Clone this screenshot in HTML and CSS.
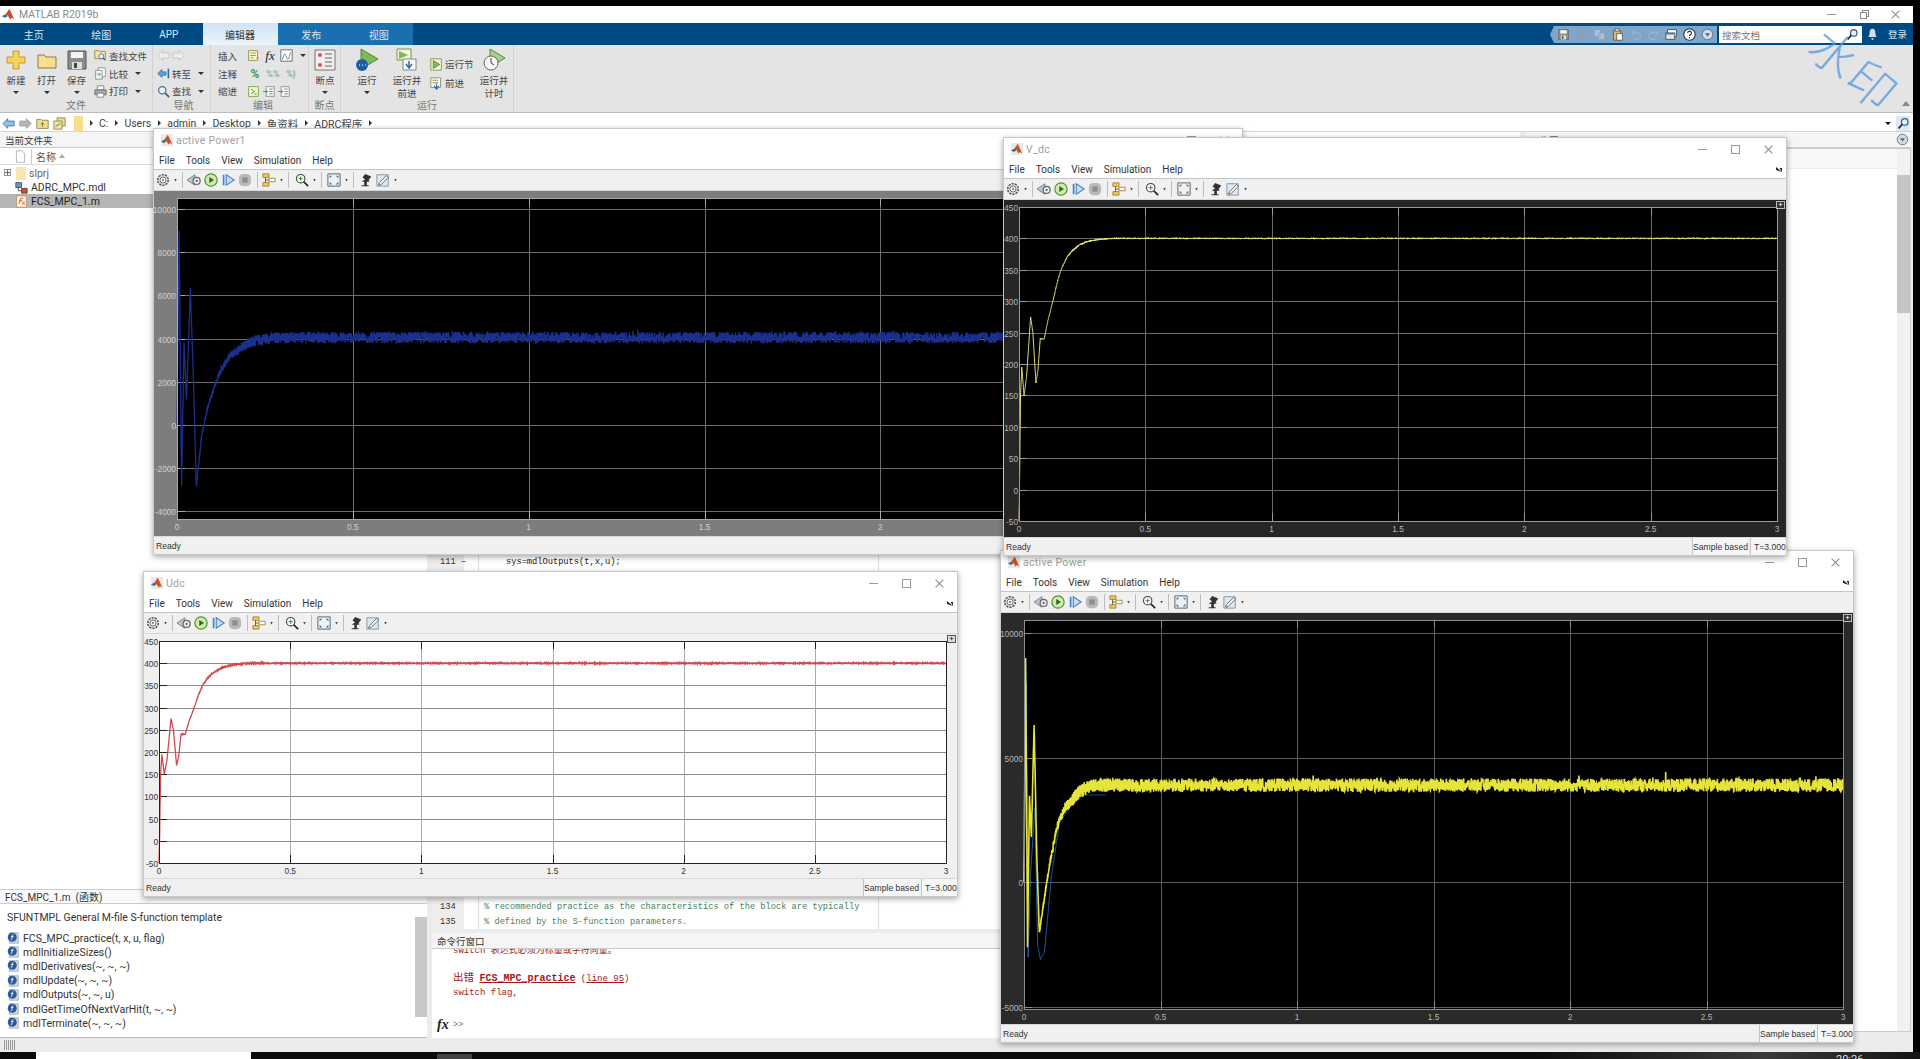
FILE: index.html
```html
<!DOCTYPE html>
<html>
<head>
  <meta charset="utf-8">
  <title>MATLAB R2019b</title>
  <link rel="stylesheet" href="styles.css">
</head>
<body>
  <svg class="sprite" xmlns="http://www.w3.org/2000/svg">
    <symbol id="i-logo" viewBox="0 0 16 16"><path d="M0 10l4-2 3-4 2-3 2 4 4 9-3-2-2 2-3-5-3 2z" fill="#c8502a"/><path d="M0 10l4-2 3 2-3 2z" fill="#3d6f9a"/></symbol>
    <symbol id="i-new" viewBox="0 0 24 24"><path d="M9 3h6v6h6v6h-6v6H9v-6H3V9h6z" fill="#f6d35f" stroke="#c99a2c"/></symbol>
    <symbol id="i-folder" viewBox="0 0 24 24"><path d="M3 7h6l2 2h10v11H3z" fill="#f7dd8f" stroke="#8c7a45"/></symbol>
    <symbol id="i-save" viewBox="0 0 24 24"><path d="M3 3h18v18H3z" fill="#8d8d8d" stroke="#555"/><path d="M6 4h12v6H6z" fill="#f4f4f4"/><path d="M7 14h10v7H7z" fill="#ddd"/><path d="M9 15h3v5H9z" fill="#444"/></symbol>
    <symbol id="i-find-file" viewBox="0 0 16 16"><path d="M1 2h5l1 1h7v9H1z" fill="#f7e3a1" stroke="#8c7a45"/><circle cx="9" cy="9" r="3" fill="#fff" stroke="#33658f"/><path d="M11 11l3 3" stroke="#33658f" stroke-width="1.5"/></symbol>
    <symbol id="i-compare" viewBox="0 0 16 16"><path d="M5 1h9v11H5z" fill="#fff" stroke="#888"/><path d="M2 4h8v11H2z" fill="#f3f3f3" stroke="#888"/><path d="M4 9h4M6 7l2 2-2 2" stroke="#5d88a8" fill="none"/></symbol>
    <symbol id="i-print" viewBox="0 0 16 16"><path d="M4 1h8v5H4z" fill="#fff" stroke="#777"/><path d="M1 6h14v6H1z" fill="#a8a8a8" stroke="#666"/><path d="M4 10h8v5H4z" fill="#fff" stroke="#777"/></symbol>
    <symbol id="i-left-pale" viewBox="0 0 16 16"><path d="M1 8l6-6v3h8v6H7v3z" fill="#eee" stroke="#c0c0c0"/></symbol>
    <symbol id="i-right-pale" viewBox="0 0 16 16"><path d="M15 8L9 2v3H1v6h8v3z" fill="#eee" stroke="#c0c0c0"/></symbol>
    <symbol id="i-goto" viewBox="0 0 16 16"><path d="M1 8l5-5v3h5v4H6v3z" fill="#5fa2d8" stroke="#2c6ea6"/><path d="M13 2h2v12h-2z" fill="#2c6ea6"/></symbol>
    <symbol id="i-lens" viewBox="0 0 16 16"><circle cx="6.5" cy="6.5" r="4.5" fill="#e8f2fa" stroke="#3a6f9c" stroke-width="1.4"/><path d="M10 10l5 5" stroke="#555" stroke-width="2"/></symbol>
    <symbol id="i-insert" viewBox="0 0 16 16"><path d="M2 2h11v12H2z" fill="#fff7d0" stroke="#7c8a3a"/><path d="M4 5h7M4 8h7M4 11h4" stroke="#7c8a3a"/><path d="M11 10h4l-2 4z" fill="#d99a2c"/></symbol>
    <symbol id="i-chart" viewBox="0 0 16 16"><path d="M1 1h14v14H1z" fill="#fff" stroke="#555"/><path d="M3 13c2-8 3-9 5-3s3 1 5-6" stroke="#3a6f9c" fill="none"/></symbol>
    <symbol id="i-indent" viewBox="0 0 16 16"><path d="M2 2h12v12H2z" fill="#f2f7d8" stroke="#6f9a3a"/><path d="M5 5l4 3-4 3M9 11h3" stroke="#3d7a28" fill="none"/></symbol>
    <symbol id="i-indent-in" viewBox="0 0 16 16"><path d="M5 2h10v12H5z" fill="#f7f7f7" stroke="#888"/><path d="M1 8h6M5 6l2 2-2 2" stroke="#4f8a32" fill="none"/><path d="M9 5h4M9 8h4M9 11h4" stroke="#4f8a32"/></symbol>
    <symbol id="i-breakpoints" viewBox="0 0 24 24"><path d="M2 2h20v20H2z" fill="#efefef" stroke="#777"/><circle cx="7" cy="7" r="2" fill="#d9534f"/><circle cx="7" cy="17" r="2" fill="#d9534f"/><path d="M12 6h7M12 10h7M12 14h7M12 18h7" stroke="#666"/></symbol>
    <symbol id="i-run" viewBox="0 0 24 24"><path d="M6 1l17 10-17 10z" fill="#7cb85c" stroke="#4f8a32"/><circle cx="7" cy="17" r="6" fill="#1f5fa0"/><path d="M4 17h1M7 17h1M10 17h1" stroke="#fff"/></symbol>
    <symbol id="i-run-advance" viewBox="0 0 24 24"><path d="M2 1h14v11H2z" fill="#f0f4d8" stroke="#6f9a3a"/><path d="M4 3l9 4-9 4z" fill="#7cb85c"/><path d="M8 11h13v11H8z" fill="#f7f7f7" stroke="#888"/><path d="M14 13v6M11 16l3 4 3-4" stroke="#2c6ea6" fill="none" stroke-width="1.5"/></symbol>
    <symbol id="i-run-section" viewBox="0 0 16 16"><path d="M1 1h13v14H1z" fill="#f4f6dc" stroke="#7c8a3a"/><path d="M4 3l8 5-8 5z" fill="#7cb85c" stroke="#4f8a32"/></symbol>
    <symbol id="i-advance" viewBox="0 0 16 16"><path d="M1 1h12v12H1z" fill="#fbfbfb" stroke="#7c8a3a"/><path d="M3 4h7M3 7h7" stroke="#7c8a3a"/><path d="M8 8v6M5 11l3 4 3-4" stroke="#2c6ea6" fill="none" stroke-width="1.5"/></symbol>
    <symbol id="i-run-time" viewBox="0 0 24 24"><path d="M8 1l15 9-15 9z" fill="#a8cf8e" stroke="#4f8a32"/><circle cx="9" cy="15" r="7" fill="#f7f7f7" stroke="#666"/><path d="M9 10v5l3 2" stroke="#444" fill="none"/></symbol>
    <symbol id="i-cut" viewBox="0 0 16 16"><path d="M5 1l4 9M11 1L7 10" stroke="#99a" fill="none"/><circle cx="5" cy="12" r="2" fill="none" stroke="#99a"/><circle cx="11" cy="12" r="2" fill="none" stroke="#99a"/></symbol>
    <symbol id="i-copy" viewBox="0 0 16 16"><path d="M2 2h7v8H2zM7 6h7v8H7z" fill="#a9c3dc" stroke="#8fa5b9"/></symbol>
    <symbol id="i-paste" viewBox="0 0 16 16"><path d="M3 3h9v12H3z" fill="#d8b878" stroke="#6a5a35"/><path d="M5 1h5v3H5z" fill="#eee" stroke="#555"/><path d="M7 7h7v8H7z" fill="#fff" stroke="#555"/></symbol>
    <symbol id="i-undo" viewBox="0 0 16 16"><path d="M3 6h7a3.500 3.500 0 0 1 0 8H6M3 6l3-3M3 6l3 3" fill="none" stroke="#9fb4c8" stroke-width="1.3"/></symbol>
    <symbol id="i-redo" viewBox="0 0 16 16"><path d="M13 6H6a3.500 3.500 0 0 0 0 8h4M13 6l-3-3M13 6l-3 3" fill="none" stroke="#9fb4c8" stroke-width="1.3"/></symbol>
    <symbol id="i-switch" viewBox="0 0 16 16"><path d="M3 2h11v9H3z" fill="#fff" stroke="#345"/><path d="M1 6h11v8H1z" fill="#e6e6e6" stroke="#345"/><path d="M1 6h11v2H1z" fill="#4f7ea8"/></symbol>
    <symbol id="i-help" viewBox="0 0 16 16"><circle cx="8" cy="8" r="7" fill="#fff" stroke="#234" stroke-width="1.3"/><path d="M5.800 6.200a2.300 2.300 0 1 1 3 2.200c-.6.300-.8.700-.8 1.400M8 11v1.500" fill="none" stroke="#234" stroke-width="1.500"/></symbol>
    <symbol id="i-more" viewBox="0 0 16 16"><circle cx="8" cy="8" r="6.500" fill="#cfdbe6" stroke="#567"/><path d="M5 6.500h6L8 10.500z" fill="#567"/></symbol>
    <symbol id="i-search" viewBox="0 0 16 16"><circle cx="9.500" cy="6" r="4" fill="#eaf3fb" stroke="#2c5f8a" stroke-width="1.500"/><path d="M6.500 9L2 14" stroke="#222" stroke-width="2"/></symbol>
    <symbol id="i-bell" viewBox="0 0 16 16"><path d="M8 1c-3 0-3.500 3-3.500 5 0 3-1.500 4-1.500 5h10c0-1-1.500-2-1.500-5 0-2-.5-5-3.500-5z" fill="#cfe0ee"/><path d="M6 12.500h4L8 15z" fill="#cfe0ee"/></symbol>
    <symbol id="i-back-blue" viewBox="0 0 16 16"><path d="M1 8l6-6v3h8v6H7v3z" fill="#8fc0e6" stroke="#3a6f9c"/></symbol>
    <symbol id="i-forward-grey" viewBox="0 0 16 16"><path d="M15 8L9 2v3H1v6h8v3z" fill="#b5b5b5" stroke="#999"/></symbol>
    <symbol id="i-up" viewBox="0 0 16 16"><path d="M1 3h5l1 1h8v10H1z" fill="#f7dd8f" stroke="#8c7a45"/><path d="M8 12V7M6 9l2-2 2 2" stroke="#3a7a28" fill="none"/></symbol>
    <symbol id="i-browse" viewBox="0 0 16 16"><path d="M5 1h10v10H5z" fill="#e8d9a0" stroke="#6f8a3a"/><path d="M1 5h10v10H1z" fill="#f7e3a1" stroke="#6f8a3a"/><path d="M3 12l6-4" stroke="#3a7a28"/></symbol>
    <symbol id="i-file" viewBox="0 0 16 16"><path d="M3 1h7l3 3v11H3z" fill="#fff" stroke="#aaa"/></symbol>
    <symbol id="i-mdl" viewBox="0 0 16 16"><path d="M1 2h7v6H1z" fill="#6f94b8" stroke="#345"/><path d="M8 9h7v6H8z" fill="#c8502a" stroke="#733"/><path d="M4 8v4h4" fill="none" stroke="#333"/></symbol>
    <symbol id="i-mfile" viewBox="0 0 16 16"><path d="M2 1h10l2 2v12H2z" fill="#fff6e6" stroke="#b98a5a"/><path d="M5 11l2-7h3M5 7h4M9 8l3 4M12 8l-3 4" stroke="#c44a2a" fill="none"/></symbol>
    <symbol id="i-fn" viewBox="0 0 16 16"><path d="M3 1h12v14H3z" fill="#d0d8e0" stroke="#9aa"/><circle cx="7" cy="7" r="6" fill="#2c5a9a"/><path d="M8.500 3.500C7 3.500 7 5 6.800 7S6.500 10.500 5 10.500M5.500 6h3" stroke="#fff" fill="none" stroke-width="1.200"/></symbol>
    <symbol id="t-gear" viewBox="0 0 16 16"><circle cx="8" cy="8" r="6" fill="#eee" stroke="#555" stroke-width="1.800" stroke-dasharray="2.500 1.200"/><circle cx="8" cy="8" r="3.500" fill="#fff" stroke="#555"/><circle cx="8" cy="8" r="1.300" fill="#888"/></symbol>
    <symbol id="t-back" viewBox="0 0 16 16"><path d="M0 8l9-6v12z" fill="#b9c7d4" stroke="#6d7f8e"/><circle cx="11" cy="9" r="4" fill="#eee" stroke="#666" stroke-width="1.400"/><circle cx="11" cy="9" r="1.300" fill="#666"/></symbol>
    <symbol id="t-play" viewBox="0 0 16 16"><circle cx="8" cy="8" r="7" fill="#d3e8b2" stroke="#4e9a2c" stroke-width="1.400"/><path d="M6 4.500l5.500 3.500L6 11.500z" fill="#2e6b1c"/></symbol>
    <symbol id="t-step" viewBox="0 0 16 16"><path d="M2 2h2v12H2z" fill="#4a86c5"/><path d="M6 2l9 6-9 6z" fill="#c9def2" stroke="#4a86c5" stroke-width="1.300"/></symbol>
    <symbol id="t-stop" viewBox="0 0 16 16"><rect x="1" y="1" width="14" height="14" rx="5" fill="#b9b9b9"/><rect x="5" y="5" width="6" height="6" fill="#8d8d8d"/></symbol>
    <symbol id="t-signal" viewBox="0 0 16 16"><path d="M1 1h7v4H1z" fill="#f0c75a" stroke="#a5812a"/><path d="M8 6h7v4H8z" fill="#fff" stroke="#a5812a"/><path d="M1 11h7v4H1z" fill="#f0c75a" stroke="#a5812a"/><path d="M4 5v6M8 8H4" stroke="#555" fill="none"/></symbol>
    <symbol id="t-zoom" viewBox="0 0 16 16"><circle cx="6.500" cy="6.500" r="4.800" fill="#fff" stroke="#444" stroke-width="1.300"/><path d="M10 10l5 5" stroke="#222" stroke-width="2"/><path d="M4 6.500h5M6.500 4v5" stroke="#2c7a2c"/></symbol>
    <symbol id="t-fit" viewBox="0 0 16 16"><path d="M1 1h14v14H1z" fill="#eef2f5" stroke="#555"/><path d="M3 3l3 0-3 3zM13 3l-3 0 3 3zM3 13l3 0-3-3zM13 13l-3 0 3-3z" fill="#3c6f9a"/></symbol>
    <symbol id="t-highlight" viewBox="0 0 16 16"><path d="M7 1l7 3-3 4 1 2H9v4h2v1H3v-1h3v-4H3l4-3-3-2z" fill="#333"/></symbol>
    <symbol id="t-edit" viewBox="0 0 16 16"><path d="M1 2h13v13H1z" fill="#dde8f2" stroke="#7a8fa3"/><path d="M12 3l2 2-8 8-3 1 1-3z" fill="#fff" stroke="#555"/></symbol>
  </svg>

  <div class="app">
    <div class="titlebar">
      <svg class="logo"><use href="#i-logo"/></svg>
      <span class="app-title">MATLAB R2019b</span>
      <div class="win-controls app-controls">
        <span class="ctl ctl-min"></span>
        <span class="ctl ctl-restore"></span>
        <span class="ctl ctl-close"></span>
      </div>
    </div>

    <div class="tabbar">
      <span class="tab">主页</span>
      <span class="tab">绘图</span>
      <span class="tab">APP</span>
      <span class="tab tab-active">编辑器</span>
      <span class="tab tab-ctx">发布</span>
      <span class="tab tab-ctx">视图</span>
      <div class="quick">
        <svg class="q-icon"><use href="#i-save"/></svg>
        <svg class="q-icon"><use href="#i-cut"/></svg>
        <svg class="q-icon"><use href="#i-copy"/></svg>
        <svg class="q-icon"><use href="#i-paste"/></svg>
        <svg class="q-icon"><use href="#i-undo"/></svg>
        <svg class="q-icon"><use href="#i-redo"/></svg>
        <svg class="q-icon"><use href="#i-switch"/></svg>
        <svg class="q-icon"><use href="#i-help"/></svg>
        <svg class="q-icon"><use href="#i-more"/></svg>
      </div>
      <div class="doc-search">
        <span>搜索文档</span>
        <svg class="q-icon"><use href="#i-search"/></svg>
      </div>
      <svg class="q-icon bell"><use href="#i-bell"/></svg>
      <span class="login">登录</span>
    </div>

    <div class="ribbon">
      <div class="rb-section sec-file">
        <div class="rb-body">
          <div class="big-btn w32"><svg class="big-icon"><use href="#i-new"/></svg><span>新建</span><i class="caret"></i></div>
          <div class="big-btn w29"><svg class="big-icon"><use href="#i-folder"/></svg><span>打开</span><i class="caret"></i></div>
          <div class="big-btn w31"><svg class="big-icon"><use href="#i-save"/></svg><span>保存</span><i class="caret"></i></div>
          <div class="rb-rows">
            <div class="rb-row"><svg class="sm-icon"><use href="#i-find-file"/></svg><span>查找文件</span></div>
            <div class="rb-row"><svg class="sm-icon"><use href="#i-compare"/></svg><span>比较</span><i class="caret"></i></div>
            <div class="rb-row"><svg class="sm-icon"><use href="#i-print"/></svg><span>打印</span><i class="caret"></i></div>
          </div>
        </div>
        <div class="rb-label">文件</div>
      </div>
      <div class="rb-section sec-nav">
        <div class="rb-body">
          <div class="rb-rows">
            <div class="rb-row"><svg class="sm-icon"><use href="#i-left-pale"/></svg><svg class="sm-icon"><use href="#i-right-pale"/></svg></div>
            <div class="rb-row"><svg class="sm-icon"><use href="#i-goto"/></svg><span>转至</span><i class="caret"></i></div>
            <div class="rb-row"><svg class="sm-icon"><use href="#i-lens"/></svg><span>查找</span><i class="caret"></i></div>
          </div>
        </div>
        <div class="rb-label">导航</div>
      </div>
      <div class="rb-section sec-edit">
        <div class="rb-body">
          <div class="rb-rows">
            <div class="rb-row"><span class="edit-word">插入</span><svg class="sm-icon"><use href="#i-insert"/></svg><span class="fx-mark">fx</span><svg class="sm-icon"><use href="#i-chart"/></svg><i class="caret"></i></div>
            <div class="rb-row"><span class="edit-word">注释</span><span class="pct">%</span><span class="pct pct-soft">%%</span><span class="pct pct-soft">%}</span></div>
            <div class="rb-row"><span class="edit-word">缩进</span><svg class="sm-icon"><use href="#i-indent"/></svg><svg class="sm-icon"><use href="#i-indent-in"/></svg><svg class="sm-icon"><use href="#i-indent-in"/></svg></div>
          </div>
        </div>
        <div class="rb-label">编辑</div>
      </div>
      <div class="rb-section sec-break">
        <div class="rb-body">
          <div class="big-btn w32"><svg class="big-icon"><use href="#i-breakpoints"/></svg><span>断点</span><i class="caret"></i></div>
        </div>
        <div class="rb-label">断点</div>
      </div>
      <div class="rb-section sec-run">
        <div class="rb-body">
          <div class="big-btn w40 run-first"><svg class="big-icon"><use href="#i-run"/></svg><span>运行</span><i class="caret"></i></div>
          <div class="big-btn w40"><svg class="big-icon"><use href="#i-run-advance"/></svg><span>运行并<br>前进</span></div>
          <div class="run-rows">
            <div class="rb-row"><svg class="sm-icon"><use href="#i-run-section"/></svg><span>运行节</span></div>
            <div class="rb-row"><svg class="sm-icon"><use href="#i-advance"/></svg><span>前进</span></div>
          </div>
          <div class="big-btn w40"><svg class="big-icon"><use href="#i-run-time"/></svg><span>运行并<br>计时</span></div>
        </div>
        <div class="rb-label">运行</div>
      </div>
      <div class="rb-collapse"></div>
    </div>

    <div class="addressbar">
      <svg class="sm-icon addr-first"><use href="#i-back-blue"/></svg>
      <svg class="sm-icon"><use href="#i-forward-grey"/></svg>
      <svg class="sm-icon"><use href="#i-up"/></svg>
      <svg class="sm-icon"><use href="#i-browse"/></svg>
      <i class="addr-folder"></i>
      <i class="crumb-arrow"></i><span>C:</span>
      <i class="crumb-arrow"></i><span>Users</span>
      <i class="crumb-arrow"></i><span>admin</span>
      <i class="crumb-arrow"></i><span>Desktop</span>
      <i class="crumb-arrow"></i><span>鱼资料</span>
      <i class="crumb-arrow"></i><span>ADRC程序</span>
      <i class="crumb-arrow"></i>
      <div class="addr-right">
        <i class="caret caret-dark"></i>
        <span class="addr-search"><svg class="sm-icon"><use href="#i-search"/></svg></span>
      </div>
    </div>

    <div class="desk">
      <div class="col-left">
        <div class="panel-head">当前文件夹</div>
        <div class="file-head">
          <svg class="sm-icon"><use href="#i-file"/></svg>
          <span class="file-head-name">名称</span>
          <i class="sort-up"></i>
        </div>
        <div class="file-list">
          <div class="file-row"><span class="plus-box"></span><i class="tree-folder"></i><span class="dim">slprj</span></div>
          <div class="file-row"><svg class="sm-icon"><use href="#i-mdl"/></svg><span>ADRC_MPC.mdl</span></div>
          <div class="file-row file-selected"><svg class="sm-icon"><use href="#i-mfile"/></svg><span>FCS_MPC_1.m</span></div>
        </div>
        <div class="details">
          <div class="details-head">FCS_MPC_1.m&nbsp; (函数)</div>
          <div class="details-body">
            <div class="details-list">
              <p class="summary">SFUNTMPL General M-file S-function template</p>
              <div class="fn-row"><svg class="fn-icon"><use href="#i-fn"/></svg>FCS_MPC_practice(t, x, u, flag)</div>
              <div class="fn-row"><svg class="fn-icon"><use href="#i-fn"/></svg>mdlInitializeSizes()</div>
              <div class="fn-row"><svg class="fn-icon"><use href="#i-fn"/></svg>mdlDerivatives(~, ~, ~)</div>
              <div class="fn-row"><svg class="fn-icon"><use href="#i-fn"/></svg>mdlUpdate(~, ~, ~)</div>
              <div class="fn-row"><svg class="fn-icon"><use href="#i-fn"/></svg>mdlOutputs(~, ~, u)</div>
              <div class="fn-row"><svg class="fn-icon"><use href="#i-fn"/></svg>mdlGetTimeOfNextVarHit(t, ~, ~)</div>
              <div class="fn-row"><svg class="fn-icon"><use href="#i-fn"/></svg>mdlTerminate(~, ~, ~)</div>
            </div>
            <div class="scrollbar"><b class="thumb"></b></div>
          </div>
        </div>
      </div>

      <div class="col-center">
        <div class="editor">
          <div class="code-row"><span class="line-no">111 &minus;</span><span class="code code-deep">sys=mdlOutputs(t,x,u);</span></div>
          <div class="code-gap"></div>
          <div class="code-row"><span class="line-no">134</span><span class="code code-comment">% recommended practice as the characteristics of the block are typically</span></div>
          <div class="code-row"><span class="line-no">135</span><span class="code code-comment">% defined by the S-function parameters.</span></div>
        </div>
        <div class="command">
          <div class="panel-head">命令行窗口</div>
          <div class="cmd-body">
            <div class="cmd-clip">switch 表达式必须为标量或字符向量。</div>
            <div class="cmd-error"><span class="cmd-word">出错</span> <u class="cmd-fn">FCS_MPC_practice</u> (<u>line 95</u>)</div>
            <div class="cmd-error">switch flag,</div>
            <div class="cmd-prompt"><span class="fx-prompt">fx</span><span>&gt;&gt;</span></div>
          </div>
        </div>
      </div>

      <div class="col-right">
        <div class="panel-head panel-head-right"><span class="ws-title">工作区</span><svg class="sm-icon"><use href="#i-more"/></svg></div>
        <div class="ws-body">
          <div class="ws-list"><div class="ws-head"></div></div>
          <div class="ws-scroll"><b class="ws-thumb"></b></div>
        </div>
      </div>
    </div>

    <div class="statusbar"><span class="grip"></span></div>
  </div>

  <div class="taskbar">
    <div class="task-white"></div>
    <div class="task-btn"></div>
    <span class="task-time">20:26</span>
  </div>

  <section class="scope scope-power1" data-title="active Power1" data-plot="power1"></section>
  <section class="scope scope-power" data-title="active Power" data-plot="power"></section>
  <section class="scope scope-udc" data-title="Udc" data-plot="udc"></section>
  <section class="scope scope-vdc" data-title="V_dc" data-plot="vdc"></section>

  <div class="watermark">水印</div>

  <template id="scope-template">
    <div class="scope-title">
      <svg class="scope-logo"><use href="#i-logo"/></svg>
      <span class="scope-name"></span>
      <div class="win-controls">
        <span class="ctl ctl-min"></span>
        <span class="ctl ctl-max"></span>
        <span class="ctl ctl-close"></span>
      </div>
    </div>
    <div class="scope-menu">
      <span>File</span><span>Tools</span><span>View</span><span>Simulation</span><span>Help</span>
      <i class="undock"></i>
    </div>
    <div class="scope-tools">
      <svg class="tool"><use href="#t-gear"/></svg><i class="tcaret"></i><i class="tsep"></i>
      <svg class="tool"><use href="#t-back"/></svg>
      <svg class="tool"><use href="#t-play"/></svg>
      <svg class="tool"><use href="#t-step"/></svg>
      <svg class="tool"><use href="#t-stop"/></svg><i class="tsep"></i>
      <svg class="tool"><use href="#t-signal"/></svg><i class="tcaret"></i><i class="tsep"></i>
      <svg class="tool tool-zoom"><use href="#t-zoom"/></svg><i class="tcaret"></i><i class="tsep"></i>
      <svg class="tool tool-nudge"><use href="#t-fit"/></svg><i class="tcaret"></i><i class="tsep"></i>
      <svg class="tool tool-nudge"><use href="#t-highlight"/></svg>
      <svg class="tool"><use href="#t-edit"/></svg><i class="tcaret"></i>
    </div>
    <div class="scope-plot">
      <svg class="plot-svg"></svg>
      <span class="expand">+</span>
    </div>
    <div class="scope-status">
      <span class="ready">Ready</span>
      <span class="status-box status-sample">Sample based</span>
      <span class="status-box status-time">T=3.000</span>
    </div>
  </template>

  <script src="plots.js"></script>
</body>
</html>
```

FILE: styles.css
```css
* {
  margin: 0;
  padding: 0;
  box-sizing: border-box;
}

body {
  width: 1920px;
  height: 1059px;
  background: #000;
  padding-top: 6px;
  overflow: hidden;
  position: relative;
  font-family: Roboto, "Noto Sans CJK SC", sans-serif;
  font-size: 10px;
  color: #333;
}

i {
  display: block;
  font-style: normal;
}

.sprite {
  display: none;
}

.app {
  width: 1913px;
  height: 1046px;
  background: #ececec;
  display: flex;
  flex-direction: column;
}

/* title bar */
.titlebar {
  height: 17px;
  background: #fff;
  display: flex;
  align-items: center;
  padding-left: 2px;
  flex-shrink: 0;
}

.logo {
  width: 13px;
  height: 13px;
  margin-right: 4px;
}

.app-title {
  color: #8a8a8a;
  font-size: 10.500px;
}

.win-controls {
  margin-left: auto;
  display: flex;
  align-items: center;
}

.app-controls {
  gap: 24px;
  padding-right: 13px;
}

.ctl {
  width: 9px;
  height: 9px;
  display: block;
  position: relative;
}

.ctl-min::after {
  content: "";
  position: absolute;
  left: 0;
  right: 0;
  top: 4px;
  border-top: 1px solid #999;
}

.ctl-max {
  border: 1px solid #999;
}

.ctl-restore {
  border: 1px solid #888;
  width: 7px;
  height: 7px;
  margin-top: 1px;
  box-shadow: 2px -2px 0 -1px #fff, 2px -2px 0 0 #888;
}

.ctl-close::before,
.ctl-close::after {
  content: "";
  position: absolute;
  left: -1px;
  right: -1px;
  top: 4px;
  border-top: 1px solid #888;
  transform: rotate(45deg);
}

.ctl-close::after {
  transform: rotate(-45deg);
}

/* tabs */
.tabbar {
  height: 22px;
  background: #004a83;
  display: flex;
  align-items: stretch;
  flex-shrink: 0;
  padding-right: 6px;
}

.tab {
  width: 67.5px;
  color: #dbe7f2;
  font-size: 10px;
  display: flex;
  align-items: center;
  justify-content: center;
}

.tab-active {
  width: 75px;
  background: linear-gradient(#cfe3f5, #eef3f8);
  color: #333;
}

.tab-ctx {
  background: #1a6fb0;
}

.quick {
  margin-left: auto;
  width: 167px;
  margin-top: 3px;
  margin-bottom: 2px;
  background: #7fa5c9;
  clip-path: polygon(4px 0, 100% 0, 100% 100%, 4px 100%, 0 50%);
  display: flex;
  align-items: center;
  padding-left: 7px;
  gap: 5px;
}

.q-icon {
  width: 13px;
  height: 13px;
  flex-shrink: 0;
}

.doc-search {
  width: 143px;
  margin: 3px 0 2px 2px;
  background: #fff;
  display: flex;
  align-items: center;
  justify-content: space-between;
  padding: 0 3px;
  color: #777;
  font-size: 9.500px;
}

.bell {
  margin: auto 0 auto 4px;
}

.login {
  color: #dbe7f2;
  font-size: 9.500px;
  margin-left: 9px;
  align-self: center;
}

/* ribbon */
.ribbon {
  height: 68px;
  background: linear-gradient(#dbe8f4 0, #e4e4e4 4px);
  border-bottom: 1px solid #bcbcbc;
  display: flex;
  flex-shrink: 0;
  position: relative;
  font-size: 9.500px;
  color: #444;
}

.rb-section {
  border-right: 1px solid #d2d2d2;
  display: flex;
  flex-direction: column;
}

.sec-file { width: 153px; }
.sec-nav { width: 58px; padding-left: 4px; }
.sec-edit { width: 98px; padding-left: 7px; }
.sec-break { width: 32px; }
.sec-run { width: 173px; }

.rb-body {
  flex: 1;
  display: flex;
  min-height: 0;
}

.rb-label {
  height: 11px;
  line-height: 11px;
  margin-bottom: 1px;
  text-align: center;
  color: #777;
  font-size: 10px;
}

.big-btn {
  display: flex;
  flex-direction: column;
  align-items: center;
  padding-top: 3px;
  line-height: 13px;
  text-align: center;
  flex-shrink: 0;
}

.big-btn .caret {
  margin-top: 4px;
}

.w29 { width: 29px; }
.w31 { width: 31px; }
.w32 { width: 32px; }
.w40 { width: 40px; }

.run-first { margin-left: 6px; }

.big-icon {
  width: 24px;
  height: 24px;
  margin-bottom: 2px;
  flex-shrink: 0;
}

.rb-rows {
  margin-left: 2px;
  padding-top: 2px;
  display: flex;
  flex-direction: column;
}

.sec-nav .rb-rows,
.sec-edit .rb-rows {
  margin-left: 0;
}

.rb-row {
  height: 18px;
  display: flex;
  align-items: center;
  gap: 2px;
  white-space: nowrap;
}

.rb-row .caret {
  margin-left: 5px;
}

.run-rows {
  margin-left: 3px;
  padding-top: 10px;
  display: flex;
  flex-direction: column;
  gap: 1px;
  width: 44px;
  flex-shrink: 0;
}

.sm-icon {
  width: 13px;
  height: 13px;
  flex-shrink: 0;
}

.caret {
  width: 0;
  height: 0;
  border-left: 3px solid transparent;
  border-right: 3px solid transparent;
  border-top: 3.500px solid #333;
}

.edit-word {
  width: 27px;
}

.fx-mark {
  font-family: "Liberation Serif", serif;
  font-style: italic;
  font-size: 13px;
  width: 16px;
  text-align: center;
  color: #222;
}

.pct {
  width: 16px;
  text-align: center;
  font-size: 12px;
  color: #3f9a3a;
  font-weight: 700;
}

.pct-soft {
  color: #8fae9a;
  font-size: 9px;
}

.rb-collapse {
  position: absolute;
  right: 3px;
  bottom: 6px;
  width: 0;
  height: 0;
  border-left: 4px solid transparent;
  border-right: 4px solid transparent;
  border-bottom: 5px solid #888;
}

/* address bar */
.addressbar {
  height: 19px;
  background: #fff;
  border-bottom: 1px solid #d5d5d5;
  display: flex;
  align-items: center;
  gap: 4px;
  font-size: 10.500px;
  color: #444;
  flex-shrink: 0;
  padding: 2px 0 0 2px;
}

.addr-folder {
  width: 9px;
  height: 15px;
  background: #f7dd8f;
  margin-left: 4px;
}

.crumb-arrow {
  width: 0;
  height: 0;
  border-top: 3px solid transparent;
  border-bottom: 3px solid transparent;
  border-left: 3.500px solid #333;
  margin: 0 2px 0 3px;
}

.addr-right {
  margin-left: auto;
  display: flex;
  align-items: center;
  gap: 5px;
  padding-right: 3px;
}

.caret-dark {
  border-top-color: #111;
}

.addr-search {
  width: 14px;
  height: 15px;
  background: #dce9f5;
  display: flex;
  align-items: center;
  justify-content: center;
}

/* workspace columns */
.desk {
  flex: 1;
  min-height: 0;
  display: grid;
  grid-template-columns: 427px 1088px 1fr;
  column-gap: 5px;
  padding-right: 2px;
  background: #ececec;
}

.col-left,
.col-center,
.col-right {
  display: flex;
  flex-direction: column;
  min-width: 0;
  min-height: 0;
}

.panel-head {
  height: 16px;
  display: flex;
  align-items: center;
  padding-left: 5px;
  background: #f5f5f5;
  font-size: 9.500px;
  border-bottom: 1px solid #ccc;
  flex-shrink: 0;
}

.file-head {
  height: 17px;
  background: #fff;
  border-bottom: 1px solid #ddd;
  display: flex;
  align-items: center;
  padding-left: 14px;
  flex-shrink: 0;
}

.file-head-name {
  border-left: 1px solid #ccc;
  padding-left: 4px;
  margin-left: 4px;
  color: #555;
}

.sort-up {
  margin-left: 3px;
  width: 0;
  height: 0;
  border-left: 3px solid transparent;
  border-right: 3px solid transparent;
  border-bottom: 4px solid #aaa;
}

.file-list {
  flex: 1;
  background: #fff;
  padding-top: 1px;
}

.file-row {
  height: 14px;
  display: flex;
  align-items: center;
  padding-left: 15px;
  gap: 3px;
  font-size: 10.500px;
  position: relative;
}

.file-selected {
  background: #b5b5b5;
  color: #222;
}

.plus-box {
  position: absolute;
  left: 4px;
  top: 3px;
  width: 7px;
  height: 7px;
  border: 1px solid #999;
  background: linear-gradient(#666, #666) center / 5px 1px no-repeat, linear-gradient(#666, #666) center / 1px 5px no-repeat;
}

.tree-folder {
  width: 10px;
  height: 13px;
  background: #f7e6ad;
  margin-left: 1px;
}

.dim {
  color: #666;
}

.details {
  height: 149px;
  flex-shrink: 0;
  background: #fff;
  display: flex;
  flex-direction: column;
  border-bottom: 1px solid #bbb;
}

.details-head {
  height: 15px;
  line-height: 15px;
  font-size: 10px;
  padding-left: 5px;
  background: #fafafa;
  border-top: 1px solid #ccc;
  border-bottom: 1px solid #ccc;
  flex-shrink: 0;
}

.details-body {
  flex: 1;
  min-height: 0;
  display: flex;
}

.details-list {
  flex: 1;
  padding-top: 7px;
  font-size: 10.500px;
}

.summary {
  padding-left: 7px;
  height: 14px;
  line-height: 14px;
  margin-bottom: 6px;
}

.fn-row {
  height: 14.200px;
  display: flex;
  align-items: center;
  padding-left: 7px;
  gap: 4px;
}

.fn-icon {
  width: 12px;
  height: 12px;
}

.scrollbar {
  width: 12px;
  background: #fff;
  padding: 13px 0 20px;
  display: flex;
}

.thumb {
  width: 100%;
  background: #c8c8c8;
}

/* editor and command */
.editor {
  flex: 1;
  min-height: 0;
  background: linear-gradient(to right, #eee 32px, #fff 32px, #fff 46px, #ddd 46px, #ddd 47px, #fff 47px, #fff 446px, #ddd 446px, #ddd 447px, #fff 447px);
  display: flex;
  flex-direction: column;
  justify-content: flex-end;
  font-family: "Liberation Mono", "Noto Sans CJK SC", monospace;
  font-size: 8.700px;
}

.code-row {
  height: 15px;
  display: flex;
  align-items: center;
}

.code-gap {
  height: 330px;
}

.line-no {
  width: 32px;
  padding-left: 8px;
  color: #333;
  white-space: nowrap;
}

.code {
  white-space: nowrap;
}

.code-deep {
  margin-left: 42px;
  color: #222;
}

.code-comment {
  margin-left: 20px;
  color: #4a8258;
}

.command {
  height: 105px;
  margin-top: 4px;
  flex-shrink: 0;
  background: #fff;
  display: flex;
  flex-direction: column;
}

.cmd-body {
  flex: 1;
  min-height: 0;
  overflow: hidden;
  position: relative;
  padding-left: 21px;
  font-family: "Liberation Mono", "Noto Sans CJK SC", monospace;
  font-size: 9px;
  color: #a01818;
}

.cmd-clip {
  height: 7px;
  line-height: 4px;
  margin-bottom: 15px;
}

.cmd-error {
  height: 15px;
  line-height: 15px;
}

.cmd-word {
  font-size: 10.500px;
}

.cmd-fn {
  font-weight: 700;
  font-size: 10px;
}

.cmd-prompt {
  position: absolute;
  left: 5px;
  bottom: 5px;
  display: flex;
  align-items: center;
  gap: 4px;
  color: #777;
}

.fx-prompt {
  font-family: "Liberation Serif", serif;
  font-style: italic;
  font-weight: 700;
  font-size: 14px;
  color: #222;
}

.panel-head-right {
  justify-content: space-between;
  padding: 0 2px 0 5px;
}

.ws-title {
  color: #666;
}

.ws-body {
  flex: 1;
  min-height: 0;
  display: flex;
  background: #fff;
  margin-bottom: 6px;
  border: 1px solid #ccc;
}

.ws-list {
  flex: 1;
}

.ws-head {
  height: 20px;
  border-bottom: 1px solid #eee;
  background: #f8f8f8;
}

.ws-scroll {
  width: 13px;
  background: #f1f1f1;
  padding: 26px 0 718px;
  display: flex;
}

.ws-thumb {
  width: 100%;
  background: #c4c4c4;
}

.statusbar {
  height: 14px;
  background: #ececec;
  flex-shrink: 0;
  display: flex;
  align-items: center;
  padding-left: 4px;
}

.grip {
  width: 12px;
  height: 10px;
  background: repeating-linear-gradient(to right, #999 0 1px, transparent 1px 2px);
}

/* taskbar strip */
.taskbar {
  height: 7px;
  position: relative;
  display: flex;
  overflow: hidden;
  background: linear-gradient(to right, #0c0c0c 0, #0c0c0c 80%, #3a3a3a 92%, #151515 100%);
}

.task-white {
  width: 215px;
  margin-left: 36px;
  background: #fff;
}

.task-btn {
  width: 35px;
  margin-left: 186px;
  background: #444;
  margin-top: 2px;
}

.task-time {
  position: absolute;
  left: 1836px;
  top: 1px;
  color: #ddd;
  font-size: 11px;
  line-height: 14px;
}

/* scope windows, free on the desktop */
.scope {
  position: absolute;
  background: #f0f0f0;
  border: 1px solid #c8c8c8;
  box-shadow: 0 2px 6px rgba(0, 0, 0, 0.35);
  display: flex;
  flex-direction: column;
}

.scope-power1 { left: 153px; top: 128px; width: 1090px; height: 427px; }
.scope-power { left: 1000px; top: 550px; width: 854px; height: 493px; }
.scope-udc { left: 143px; top: 571px; width: 815px; height: 326px; }
.scope-vdc { left: 1003px; top: 137px; width: 784px; height: 419px; }

.scope-title {
  height: 22px;
  background: #fff;
  display: flex;
  align-items: center;
  padding-left: 7px;
  flex-shrink: 0;
}

.scope-logo {
  width: 12px;
  height: 12px;
  background: #e8e8e8;
  margin-right: 3px;
}

.scope-name {
  color: #a0a0a0;
  font-size: 10.500px;
  letter-spacing: 0.3px;
}

.scope-title .win-controls {
  gap: 24px;
  padding-right: 13px;
}

.scope-menu {
  height: 19px;
  background: #fff;
  border-bottom: 1px solid #c4c4c4;
  display: flex;
  align-items: center;
  gap: 11px;
  padding-left: 5px;
  font-size: 10px;
  color: #333;
  position: relative;
  flex-shrink: 0;
}

.undock {
  position: absolute;
  right: 4px;
  top: 7px;
  width: 6px;
  height: 5px;
  background: #222;
  clip-path: polygon(0 0, 100% 100%, 100% 20%, 60% 20%, 100% 100%, 0 60%);
}

.scope-tools {
  height: 21px;
  background: #f0f0f0;
  border-bottom: 1px solid #d8d8d8;
  display: flex;
  align-items: center;
  flex-shrink: 0;
}

.tool {
  width: 16px;
  height: 14px;
  margin-right: 1px;
  flex-shrink: 0;
}

.tool:first-child {
  margin-left: 1px;
}

.tool-zoom {
  margin-left: 2px;
}

.tool-nudge {
  margin-left: 1px;
}

.tcaret {
  width: 7px;
  height: 3px;
  background: #444;
  clip-path: polygon(2px 0, 5px 0, 3.500px 3px);
  flex-shrink: 0;
}

.tsep {
  width: 1px;
  height: 16px;
  margin: 0 3px;
  background: #bdbdbd;
  flex-shrink: 0;
}

.scope-plot {
  flex: 1;
  min-height: 0;
  position: relative;
  overflow: hidden;
}

.scope-power1 .scope-plot { background: #7d7d7d; }
.scope-power .scope-plot { background: #2a2a2a; }
.scope-vdc .scope-plot { background: #262626; }
.scope-udc .scope-plot { background: #f0f0f0; }

.plot-svg {
  display: block;
  width: 100%;
  height: 100%;
}

.plot-label {
  font-family: "Liberation Sans", sans-serif;
  font-size: 8.300px;
  fill: #b5b5b5;
}

.scope-power1 .plot-label { fill: #d0d0d0; }
.scope-udc .plot-label { fill: #333; }

.expand {
  position: absolute;
  right: 1px;
  top: 1px;
  width: 9px;
  height: 8px;
  background: #333;
  border: 1px solid #bbb;
  color: #fff;
  font-size: 8px;
  line-height: 5px;
  text-align: center;
}

.scope-udc .expand {
  background: #ddd;
  border-color: #555;
  color: #222;
}

.scope-status {
  height: 18px;
  background: #f0f0f0;
  border-top: 1px solid #d8d8d8;
  display: flex;
  align-items: stretch;
  font-family: "Liberation Sans", sans-serif;
  font-size: 8.600px;
  color: #333;
  flex-shrink: 0;
}

.ready {
  flex: 1;
  align-self: center;
  padding-left: 2px;
}

.status-box {
  border-left: 1px solid #c4c4c4;
  background: #f6f6f6;
  display: flex;
  align-items: center;
  padding: 0 3px;
  margin-left: 2px;
  white-space: nowrap;
}

.status-sample { width: 56px; justify-content: center; }
.status-time { width: 36px; }

.watermark {
  position: absolute;
  left: 1806px;
  top: 42px;
  font-family: "Noto Sans CJK SC", sans-serif;
  font-size: 47px;
  font-weight: 300;
  line-height: 52px;
  letter-spacing: 2px;
  color: rgba(80, 150, 225, 0.75);
  transform: rotate(40deg);
  white-space: nowrap;
}
```

FILE: plots.js
```js
// scope traces, keypoints read off the plots, noise added on the flat part
var dcKeys = [[0,-50],[0.002,0],[0.006,150],[0.011,195],[0.02,150],[0.03,180],[0.046,275],[0.055,250],[0.067,170],[0.075,190],[0.084,240],[0.1,240],
  [0.115,270],[0.134,300],[0.15,328],[0.166,350],[0.19,370],[0.21,380],[0.24,390],[0.27,395],[0.31,398],[0.36,400],[3,400]];
var power1Keys = [[0,0],[0.006,9000],[0.013,-2800],[0.02,3800],[0.027,1200],[0.038,6300],[0.047,2000],[0.055,-2900],[0.07,-500],[0.09,1000],
  [0.12,2400],[0.15,3200],[0.2,3800],[0.25,4000],[0.3,4050],[3,4050]];
var powerKeys = [[0,0],[0.006,9000],[0.013,-2600],[0.02,3500],[0.027,1800],[0.037,6350],[0.047,1000],[0.056,-2000],[0.07,-1000],[0.09,500],
  [0.12,2200],[0.15,3000],[0.2,3600],[0.25,3900],[3,3900]];
var powerUnderKeys = [[0,0],[0.008,8000],[0.015,-3000],[0.025,500],[0.04,3000],[0.05,-2500],[0.06,-3100],[0.075,-2800],[0.1,200],[0.13,2400],[0.2,3500],[3,3800]];

var plots = {
  power1: {
    left: 23, top: 7, right: 1078, bottom: 328, yMin: -4350, yMax: 10510, yStep: 2000, yFrom: -4000,
    grid: '#6e6e6e', axis: '#a8a8a8',
    traces: [{ keys: power1Keys, color: '#1b2f8f', noise: 260, spikes: 120, weight: 1.3 }]
  },
  power: {
    left: 23, top: 7, right: 842, bottom: 396, yMin: -5080, yMax: 10524, yStep: 5000, yFrom: -5000,
    grid: '#5c5c5c', axis: '#8d8d8d',
    traces: [
      { keys: powerUnderKeys, color: '#2a5da8', noise: 0, spikes: 0, until: 0.3, weight: 1 },
      { keys: powerKeys, color: '#e4e43a', noise: 270, spikes: 180, weight: 1.6 }
    ]
  },
  udc: {
    left: 15, top: 7, right: 802, bottom: 229, yMin: -50, yMax: 450, yStep: 50, yFrom: -50,
    grid: '#8c8c8c', gridV: '#aaa', axis: '#222',
    traces: [{ keys: dcKeys, color: '#d0484e', noise: 1.2, spikes: 0, weight: 1.3 }]
  },
  vdc: {
    left: 15, top: 7, right: 773, bottom: 321, yMin: -50, yMax: 450, yStep: 50, yFrom: -50,
    grid: '#6a6a6a', axis: '#9a9a9a',
    traces: [{ keys: dcKeys, color: '#e6e67a', noise: 1.2, spikes: 0, weight: 1 }]
  }
};

var seed = 12345;
function rnd() {
  seed = (seed * 1103515245 + 12345) % 2147483648;
  return seed / 2147483648;
}

function valueAt(keys, t) {
  for (var i = 1; i < keys.length; i++) {
    if (t <= keys[i][0]) {
      var a = keys[i - 1], b = keys[i];
      return a[1] + (b[1] - a[1]) * (t - a[0]) / (b[0] - a[0]);
    }
  }
  return keys[keys.length - 1][1];
}

function el(name, attrs, text) {
  var node = document.createElementNS('http://www.w3.org/2000/svg', name);
  for (var k in attrs) node.setAttribute(k, attrs[k]);
  if (text !== undefined) node.textContent = text;
  return node;
}

function line(svg, x1, y1, x2, y2, color) {
  svg.appendChild(el('line', { x1: x1, y1: y1, x2: x2, y2: y2, stroke: color, 'shape-rendering': 'crispEdges' }));
}

function drawPlot(svg, p) {
  var w = p.right - p.left;
  var h = p.bottom - p.top;
  var px = function (t) { return p.left + w * t / 3; };
  var py = function (v) { return p.bottom - h * (v - p.yMin) / (p.yMax - p.yMin); };

  svg.appendChild(el('rect', { x: p.left, y: p.top, width: w, height: h, fill: p === plots.udc ? '#fff' : '#000' }));

  for (var v = p.yFrom; v <= p.yMax; v += p.yStep) {
    var y = Math.round(py(v)) + 0.5;
    line(svg, p.left, y, p.right, y, p.grid);
    line(svg, p.left, y, p.left + 8, y, p.axis);
    svg.appendChild(el('text', { 'class': 'plot-label', x: p.left - 1, y: y + 3, 'text-anchor': 'end' }, v));
  }
  for (var t = 0.5; t <= 2.5; t += 0.5) {
    var x = Math.round(px(t)) + 0.5;
    line(svg, x, p.top, x, p.bottom, p.gridV || p.grid);
    line(svg, x, p.top, x, p.top + 8, p.axis);
    line(svg, x, p.bottom - 8, x, p.bottom, p.axis);
  }
  for (var n = 0; n <= 6; n++) {
    svg.appendChild(el('text', { 'class': 'plot-label', x: px(n / 2), y: p.bottom + 11, 'text-anchor': 'middle' }, n / 2));
  }

  p.traces.forEach(function (tr) {
    var pts = [];
    var end = tr.until || 3;
    // fine steps through the start-up swing, about four samples a pixel after it
    for (var s = 0; s <= end; s += s < 0.4 ? 0.0005 : 3 / w / 4) {
      var val = valueAt(tr.keys, s);
      var amount = Math.min(1, s / 0.2);
      val += (rnd() - 0.5) * 2 * tr.noise * amount;
      if (tr.spikes && rnd() > 0.995) val += tr.spikes * (rnd() + 0.5) * amount;
      pts.push(px(s).toFixed(1) + ',' + py(val).toFixed(1));
    }
    svg.appendChild(el('polyline', { points: pts.join(' '), fill: 'none', stroke: tr.color, 'stroke-width': tr.weight }));
  });

  // frame goes last so the traces start under it
  svg.appendChild(el('rect', { x: p.left + 0.5, y: p.top + 0.5, width: w, height: h, fill: 'none', stroke: p.axis }));
}

var template = document.getElementById('scope-template');
document.querySelectorAll('.scope').forEach(function (scope) {
  scope.appendChild(template.content.cloneNode(true));
  scope.querySelector('.scope-name').textContent = scope.dataset.title;
  drawPlot(scope.querySelector('.plot-svg'), plots[scope.dataset.plot]);
});
```
